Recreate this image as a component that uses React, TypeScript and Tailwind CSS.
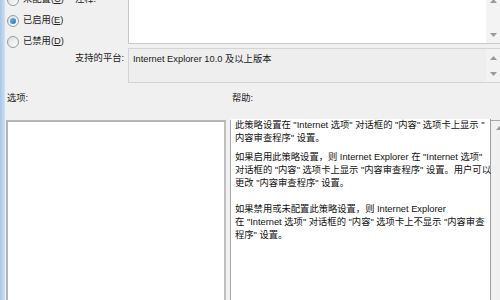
import React from "react";

const font = { fontFamily: '"Liberation Sans", "Noto Sans CJK SC", sans-serif' };

function Radio({ checked, label, accel }: { checked?: boolean; label: string; accel: string }) {
  return (
    <div className="flex items-center h-[21px]">
      <div className="w-[12px] h-[12px] rounded-full border border-[#9a9a9a] bg-gradient-to-br from-[#dcdcdc] to-[#ffffff] flex items-center justify-center">
        {checked && <div className="w-[6px] h-[6px] rounded-full bg-gradient-to-br from-[#6cc0f5] to-[#1f6fc4]" />}
      </div>
      <span className="ml-[4px] text-[9.3px] text-[#222]">
        {label}(<span className="underline">{accel}</span>)
      </span>
    </div>
  );
}

function Arrow({ up }: { up?: boolean }) {
  return (
    <svg width="7" height="4" viewBox="0 0 7 4">
      {up ? <path d="M0 4 L3.5 0 L7 4 Z" fill="#9a9a9a" /> : <path d="M0 0 L3.5 4 L7 0 Z" fill="#9a9a9a" />}
    </svg>
  );
}

export default function App() {
  return (
    <div className="w-[500px] h-[300px] overflow-hidden bg-[#f0f0f0] flex" style={font}>
      <div className="w-[5px] bg-gradient-to-r from-[#a8c6e6] to-[#cfe0f2]" />
      <div className="flex-1 flex flex-col">
        {/* top */}
        <div className="flex -mt-[11px]">
          <div className="w-[70px] pl-[2px] flex flex-col">
            <Radio label="未配置" accel="C" />
            <Radio checked label="已启用" accel="E" />
            <Radio label="已禁用" accel="D" />
          </div>
          <div className="flex-1 flex flex-col">
            <div className="flex h-[55px]">
              <div className="w-[53px] pt-[4px] text-[9.3px] text-[#222]">注释:</div>
              <div className="flex-1 flex border border-[#c8c8c8] bg-white -mr-[2px]">
                <div className="flex-1" />
                <div className="w-[15px] bg-[#f3f3f3] flex flex-col items-center justify-between pt-[9px] pb-[6px]">
                  <Arrow up />
                  <Arrow />
                </div>
              </div>
            </div>
            <div className="flex h-[35px] mt-[4px]">
              <div className="w-[53px] pt-[4px] text-[9.3px] text-[#222]">支持的平台:</div>
              <div className="flex-1 flex border border-[#d4d4d4] bg-[#eeeeee] -mr-[2px]">
                <div className="flex-1 pl-[4px] pt-[4px] text-[9.3px] text-[#1a1a1a] whitespace-nowrap">
                  Internet Explorer 10.0 及以上版本
                </div>
                <div className="w-[15px] bg-[#f2f2f2] flex flex-col items-center justify-between pt-[7px] pb-[6px]">
                  <Arrow up />
                  <Arrow />
                </div>
              </div>
            </div>
          </div>
        </div>
        {/* labels */}
        <div className="flex mt-[9px] text-[9.3px] text-[#222]">
          <div className="w-[227px] pl-[2px]">选项:</div>
          <div>帮助:</div>
        </div>
        {/* boxes */}
        <div className="flex mt-[14px] flex-1 min-h-0">
          <div className="w-[220px] ml-[1px] border-2 border-[#b4b4b4] border-r-[#c0c0c0] bg-white h-[200px]" />
          <div className="ml-[4px] flex-1 flex border border-[#a8a8a8] h-[200px] -mr-[8px]">
            <div className="w-[260px] border-r border-[#a0a0a0] bg-white pl-[4px] -mt-[2px] text-[9.3px] leading-[13px] text-[#111] whitespace-nowrap">
              <div>此策略设置在 "Internet 选项" 对话框的 "内容" 选项卡上显示 "</div>
              <div>内容审查程序" 设置。</div>
              <div className="mt-[6px]">如果启用此策略设置，则 Internet Explorer 在 "Internet 选项"</div>
              <div>对话框的 "内容" 选项卡上显示 "内容审查程序" 设置。用户可以</div>
              <div>更改 "内容审查程序" 设置。</div>
              <div className="mt-[13px]">如果禁用或未配置此策略设置，则 Internet Explorer</div>
              <div>在 "Internet 选项" 对话框的 "内容" 选项卡上不显示 "内容审查</div>
              <div>程序" 设置。</div>
            </div>
            <div className="flex-1 bg-[#f0f0f0] flex flex-col items-center pt-[5px]">
              <Arrow up />
            </div>
          </div>
        </div>
      </div>
    </div>
  );
}
